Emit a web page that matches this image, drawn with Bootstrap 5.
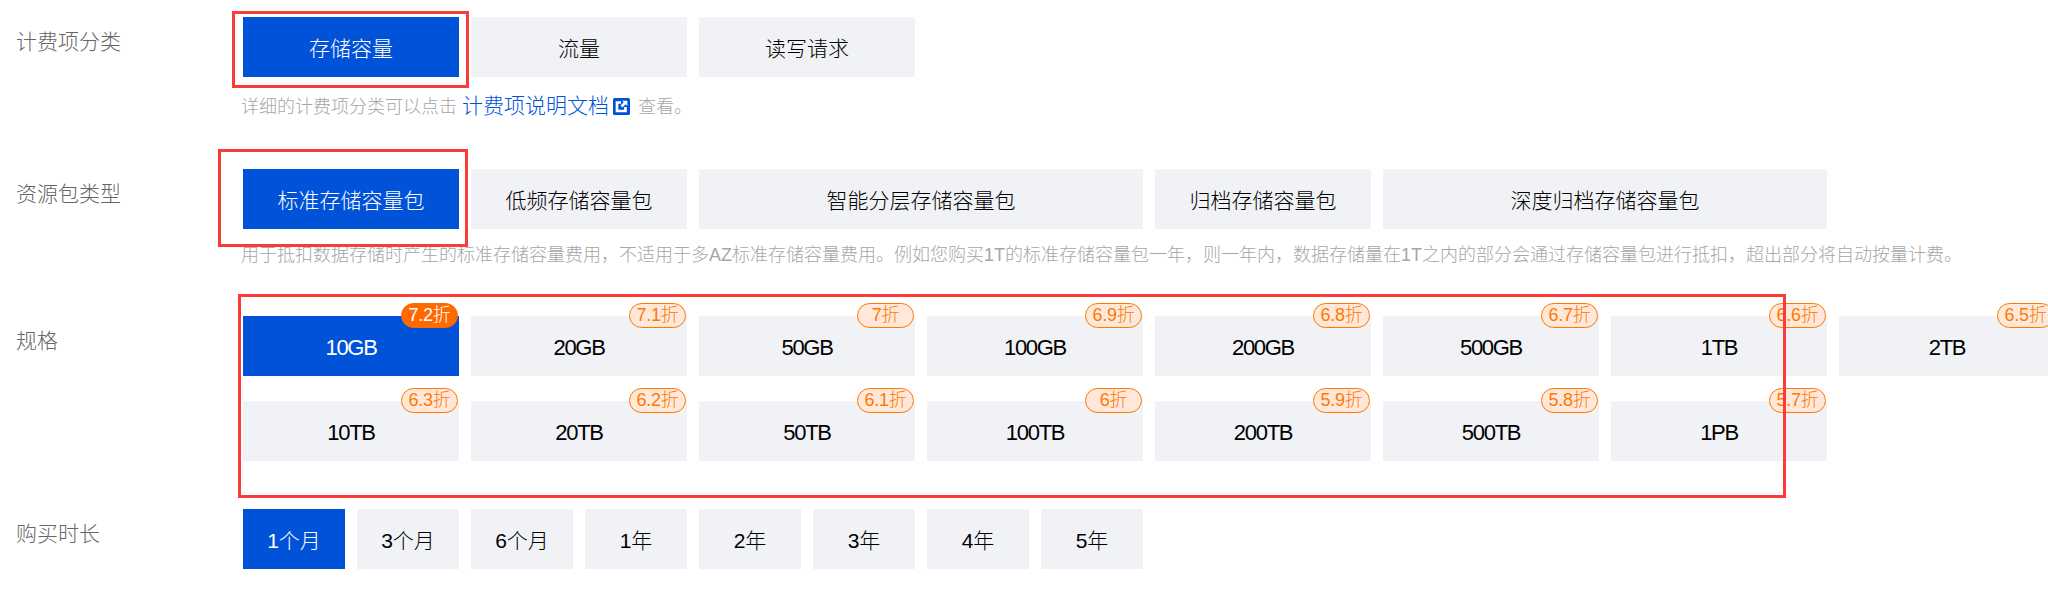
<!doctype html>
<html lang="zh"><head><meta charset="utf-8">
<link href="https://cdn.jsdelivr.net/npm/bootstrap@5.3.0/dist/css/bootstrap.min.css" rel="stylesheet">
<script src="https://cdn.jsdelivr.net/npm/bootstrap@5.3.0/dist/js/bootstrap.bundle.min.js"></script>
<style>
html,body{height:589px;overflow:hidden;background:#fff}
body{font-family:"Liberation Sans","Noto Sans CJK SC",sans-serif;font-size:21px;font-weight:300;color:#000;width:2048px}
.sheet{padding:17px 0 0 16px;position:relative;height:589px;overflow:hidden}
.rowlab{width:227px;flex:none;font-size:21px;color:#666;line-height:49px}
.opts{gap:12px;width:1900px}
.optsgrid{gap:25px 12px;width:1812px}
.opt{position:relative;height:60px;background:#f0f2f5;color:#000;font-size:21px;font-weight:300;flex:none;padding:3px 0 0;border:0;border-radius:0;line-height:57px}
.opt.on,.opt.on:hover{background:#0052d9;color:#fff}
.opt:hover{background:#f0f2f5;color:#000}
.num{font-size:22px;letter-spacing:-1.3px}
.w1{width:216px}.w2{width:444px}.w3{width:102px}
.off{position:absolute;top:-13px;right:1px;width:57px;height:25px;border:1px solid #ff7800;border-radius:12.5px;background:#ffe8d9;color:#ff7800;font-size:18px;line-height:23px;letter-spacing:-.3px;white-space:nowrap;text-align:center}
.on .off{background:#ff6a00;border-color:#ff6a00;color:#fff}
.hint{font-size:18px;color:#a6a6a6;line-height:24px;margin-top:14px;white-space:nowrap;margin-left:-2px}
.hint.first{margin-top:17px}
.hint a{color:#0052d9;text-decoration:none;font-size:21px}
.hint svg{vertical-align:-2px;margin:0 8px 0 4px}
.mk{position:absolute;border:3px solid #fb3a3a;pointer-events:none}
.mk1{left:232px;top:11px;width:237px;height:77px}
.mk2{left:218px;top:149px;width:250px;height:98px}
.mk3{left:238px;top:294px;width:1548px;height:204px}
.r1{margin-bottom:50px}.r2{margin-bottom:49px}.r3{margin-bottom:48px}
</style></head><body>
<div class="sheet">
<div class="d-flex r1"><div class="rowlab">计费项分类</div><div>
<div class="d-flex opts"><button class="btn opt on w1">存储容量</button><button class="btn opt w1">流量</button><button class="btn opt w1">读写请求</button></div>
<div class="hint first">详细的计费项分类可以点击 <a href="#">计费项说明文档</a><svg width="17" height="17" viewBox="0 0 16 16"><rect width="16" height="16" rx="1.500" fill="#0052d9"/><path d="M2.500 3h5v2.500H5v5.500h5.500V8.500H13V13.500H2.500z" fill="#fff"/><path d="M8.500 2.500h5v5l-1.600-1.600-3 3-1.800-1.800 3-3z" fill="#fff"/></svg>查看。</div></div></div>

<div class="d-flex r2"><div class="rowlab">资源包类型</div><div>
<div class="d-flex opts"><button class="btn opt on w1">标准存储容量包</button><button class="btn opt w1">低频存储容量包</button><button class="btn opt w2">智能分层存储容量包</button><button class="btn opt w1">归档存储容量包</button><button class="btn opt w2">深度归档存储容量包</button></div>
<div class="hint">用于抵扣数据存储时产生的标准存储容量费用，不适用于多AZ标准存储容量费用。例如您购买1T的标准存储容量包一年，则一年内，数据存储量在1T之内的部分会通过存储容量包进行抵扣，超出部分将自动按量计费。</div></div></div>

<div class="d-flex r3"><div class="rowlab">规格</div><div>
<div class="d-flex flex-wrap optsgrid">
<button class="btn opt on w1"><span class="num">10GB</span><span class="off">7.2折</span></button>
<button class="btn opt w1"><span class="num">20GB</span><span class="off">7.1折</span></button>
<button class="btn opt w1"><span class="num">50GB</span><span class="off">7折</span></button>
<button class="btn opt w1"><span class="num">100GB</span><span class="off">6.9折</span></button>
<button class="btn opt w1"><span class="num">200GB</span><span class="off">6.8折</span></button>
<button class="btn opt w1"><span class="num">500GB</span><span class="off">6.7折</span></button>
<button class="btn opt w1"><span class="num">1TB</span><span class="off">6.6折</span></button>
<button class="btn opt w1"><span class="num">2TB</span><span class="off">6.5折</span></button>
<button class="btn opt w1"><span class="num">10TB</span><span class="off">6.3折</span></button>
<button class="btn opt w1"><span class="num">20TB</span><span class="off">6.2折</span></button>
<button class="btn opt w1"><span class="num">50TB</span><span class="off">6.1折</span></button>
<button class="btn opt w1"><span class="num">100TB</span><span class="off">6折</span></button>
<button class="btn opt w1"><span class="num">200TB</span><span class="off">5.9折</span></button>
<button class="btn opt w1"><span class="num">500TB</span><span class="off">5.8折</span></button>
<button class="btn opt w1"><span class="num">1PB</span><span class="off">5.7折</span></button>
</div></div></div>

<div class="d-flex"><div class="rowlab">购买时长</div><div>
<div class="d-flex opts">
<button class="btn opt on w3">1个月</button><button class="btn opt w3">3个月</button><button class="btn opt w3">6个月</button><button class="btn opt w3">1年</button><button class="btn opt w3">2年</button><button class="btn opt w3">3年</button><button class="btn opt w3">4年</button><button class="btn opt w3">5年</button>
</div></div></div>

<div class="mk mk1"></div><div class="mk mk2"></div><div class="mk mk3"></div>
</div>
</body></html>
